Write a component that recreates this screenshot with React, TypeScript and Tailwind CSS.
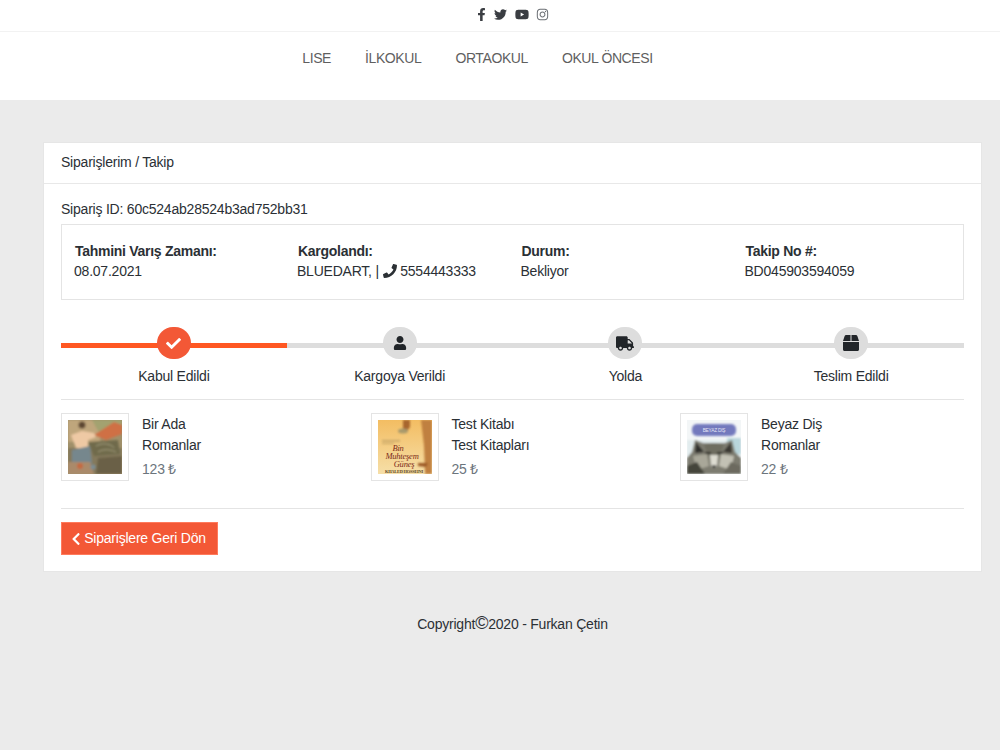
import { FaBox, FaCheck, FaChevronLeft, FaFacebookF, FaInstagram, FaPhone, FaTruck, FaTwitter, FaUser, FaYoutube } from 'react-icons/fa'
import type { IconType } from 'react-icons'

const NAV = ['LISE', 'İLKOKUL', 'ORTAOKUL', 'OKUL ÖNCESI']

const INFO = [
  { title: 'Tahmini Varış Zamanı:', value: '08.07.2021', width: 'w-[223px]' },
  { title: 'Kargolandı:', value: null, width: 'w-[223.5px]' },
  { title: 'Durum:', value: 'Bekliyor', width: 'w-[224px]' },
  { title: 'Takip No #:', value: 'BD045903594059', width: 'flex-1' },
]

const STEPS: { label: string; icon: IconType; size: string; active?: boolean }[] = [
  { label: 'Kabul Edildi', icon: FaCheck, size: 'w-[15px] h-[15px]', active: true },
  { label: 'Kargoya Verildi', icon: FaUser, size: 'w-[14px] h-[14px]' },
  { label: 'Yolda', icon: FaTruck, size: 'w-[18px] h-[15px]' },
  { label: 'Teslim Edildi', icon: FaBox, size: 'w-[16px] h-[16px]' },
]

function CoverIsland() {
  return (
    <svg viewBox="0 0 54 54" className="w-[54px] h-[54px] block">
      <defs>
        <filter id="soft1"><feGaussianBlur stdDeviation="1.1" /></filter>
      </defs>
      <rect width="54" height="54" fill="#a0906a" />
      <g filter="url(#soft1)">
        <rect x="0" y="0" width="32" height="22" fill="#bfa67c" />
        <path d="M24 0H54V14L34 18Z" fill="#a3a26f" />
        <path d="M26 15L46 2L54 5V14L38 20Z" fill="#cf6f45" />
        <path d="M0 28H54V54H0Z" fill="#84795c" />
        <path d="M3 15L14 11L26 13L28 17L20 20L20 30L8 28Z" fill="#eec9a4" />
        <circle cx="14" cy="5" r="3.5" fill="#5d4632" />
        <path d="M4 30L22 26L24 44L4 44Z" fill="#76878d" />
        <path d="M20 22L50 20L52 34L26 36Z" fill="#6f6a4c" />
        <path d="M28 26C34 22 44 24 46 28M30 32C36 28 44 30 48 32" stroke="#a49e7c" strokeWidth="1" fill="none" />
        <path d="M30 38L54 36V54H28Z" fill="#6a6146" />
        <path d="M0 42L22 42L26 54H0Z" fill="#aa8a6b" />
        <circle cx="12" cy="46" r="3" fill="#c46a42" />
        <circle cx="25" cy="47" r="2.5" fill="#7b8e95" />
      </g>
    </svg>
  )
}

function CoverTest() {
  return (
    <svg viewBox="0 0 54 54" className="w-[54px] h-[54px] block">
      <defs>
        <filter id="soft2"><feGaussianBlur stdDeviation="0.8" /></filter>
        <linearGradient id="sand" x1="0" y1="0" x2="0" y2="1">
          <stop offset="0" stopColor="#f3bd62" />
          <stop offset="1" stopColor="#f6dfa8" />
        </linearGradient>
      </defs>
      <rect width="54" height="54" fill="url(#sand)" />
      <g filter="url(#soft2)">
        <path d="M43 0H54V54H47L46 26Z" fill="#c0803f" />
        <path d="M25 0H32V7L29 11L25 9Z" fill="#a8662f" />
        <ellipse cx="25" cy="11" rx="5" ry="2.5" fill="#a99a6c" />
        <rect x="4" y="20" width="18" height="1.5" fill="#c2a164" />
        <rect x="4" y="23" width="12" height="1" fill="#c2a164" />
        <path d="M40 43L50 43L48 47L40 46Z" fill="#9c5a28" />
      </g>
      <g fontFamily="'Liberation Serif', serif" fontStyle="italic" fill="#7c2a18" textAnchor="middle">
        <text x="20" y="31" fontSize="8.5">Bin</text>
        <text x="24" y="39" fontSize="8.5">Muhteşem</text>
        <text x="26" y="47" fontSize="8.5">Güneş</text>
      </g>
      <text x="26" y="52.5" fontSize="4.4" fontWeight="bold" fill="#5c4525" textAnchor="middle" fontFamily="'Liberation Serif', serif">KHALED HOSSEINI</text>
    </svg>
  )
}

function CoverWolf() {
  return (
    <svg viewBox="0 0 54 54" className="w-[54px] h-[54px] block">
      <defs>
        <filter id="soft3"><feGaussianBlur stdDeviation="1" /></filter>
      </defs>
      <rect width="54" height="54" fill="#f3f6f7" />
      <g filter="url(#soft3)">
        <rect x="5" y="4" width="44" height="12" rx="5" fill="#7379bd" />
        <rect x="0" y="20" width="54" height="16" fill="#e2ecee" />
        <path d="M40 18H54V34H40Z" fill="#b9d6dc" />
        <path d="M0 54V38L5 32L8 20L16 23H38L45 20L48 32L54 38V54Z" fill="#7d7c70" />
        <path d="M9 22L17 32L8 33Z" fill="#2f2d29" />
        <path d="M44 22L36 32L45 33Z" fill="#3a3832" />
        <path d="M17 25L27 23L37 25L33 36L27 38L21 36Z" fill="#6e6d60" />
        <path d="M6 36L20 34L22 46L10 50Z" fill="#a9a799" />
        <path d="M47 36L34 34L32 46L44 50Z" fill="#c2c1b4" />
        <path d="M23 35H31L30 46L27 49L24 46Z" fill="#dddcd1" />
        <path d="M24.5 45.5H29.5L27 49Z" fill="#191816" />
        <rect x="18" y="32" width="6" height="2" fill="#2c2b25" />
        <rect x="30" y="32" width="6" height="2" fill="#2c2b25" />
        <path d="M0 46L10 42L18 54H0Z" fill="#45443b" />
        <path d="M54 46L44 42L36 54H54Z" fill="#6c6b5f" />
      </g>
      <text x="27" y="11.5" fontSize="4.8" fill="#e2e4f4" textAnchor="middle" fontFamily="'Liberation Sans', sans-serif">BEYAZ DIŞ</text>
    </svg>
  )
}

const ITEMS = [
  { name: 'Bir Ada', category: 'Romanlar', price: '123 ₺', cover: <CoverIsland /> },
  { name: 'Test Kitabı', category: 'Test Kitapları', price: '25 ₺', cover: <CoverTest /> },
  { name: 'Beyaz Diş', category: 'Romanlar', price: '22 ₺', cover: <CoverWolf /> },
]

export default function App() {
  return (
    <div className="min-h-[750px] bg-[#ebebeb] text-[14px] leading-[21px] tracking-[-0.22px] text-[#2b3035] font-['Liberation_Sans',Arial,sans-serif]">
      {/* Top */}
      <header className="bg-white h-[100px]">
        <div className="h-[32px] border-b border-[#f2f2f2] flex items-center justify-center gap-[8px] text-[#3a3d42] pb-[2px] pl-[26px]">
          <FaFacebookF className="w-[9px] h-[13px]" />
          <FaTwitter className="w-[13px] h-[13px]" />
          <FaYoutube className="w-[14px] h-[13px]" />
          <FaInstagram className="w-[13px] h-[13px] -ml-px text-[#6b6f74]" />
        </div>
        <nav className="flex justify-center gap-[34px] pt-[16px] pr-[45px] text-[#5f5f5f] tracking-[-0.4px]">
          {NAV.map((n) => (
            <a key={n} className="leading-[21px]">{n}</a>
          ))}
        </nav>
      </header>

      <main className="pt-[42px] pl-[43px] pr-[18px]">
        <section className="bg-white border border-[#e6e6e6] h-[430px]">
          <div className="h-[41px] border-b border-[#e8e8e8] px-[17px] flex items-center pb-[1px]">
            Siparişlerim / Takip
          </div>

          <div className="px-[17px] pt-[15px]">
            <div>Sipariş ID: 60c524ab28524b3ad752bb31</div>

            <div className="mt-[4px] h-[76px] border border-[#e4e4e4] flex pl-[12px] pt-[16px]">
              {INFO.map((c) => (
                <div key={c.title} className={c.width}>
                  <div className="font-bold pl-px tracking-[-0.28px]">{c.title}</div>
                  <div className="mt-[-1px]">
                    {c.value ?? (
                      <>
                        BLUEDART, | <FaPhone className="inline w-[14px] h-[14px] align-[-2px]" /> 5554443333
                      </>
                    )}
                  </div>
                </div>
              ))}
            </div>

            {/* Stepper */}
            <div className="mt-[27px] flex h-[60px]">
              {STEPS.map(({ label, icon: Icon, size, active }) => (
                <div key={label} className="relative flex-1 flex flex-col items-center">
                  <div className={`absolute left-0 right-0 top-[16px] h-[5px] ${active ? 'bg-[#ff5722]' : 'bg-[#dddddd]'}`} />
                  <div className={`relative z-10 w-[34px] h-[34px] rounded-full flex items-center justify-center ${active ? 'bg-[#f35836] text-white' : 'bg-[#dddddd] text-[#212529]'}`}>
                    <Icon className={size} />
                  </div>
                  <div className="mt-[7px]">{label}</div>
                </div>
              ))}
            </div>

            <div className="mt-[12px] border-t border-[#e4e4e4]" />

            {/* Books */}
            <div className="mt-[13px] flex">
              {ITEMS.map((it) => (
                <div key={it.name} className="w-[309.5px] shrink-0 flex">
                  <div className="w-[68px] h-[68px] border border-[#e4e4e4] flex items-center justify-center shrink-0">
                    {it.cover}
                  </div>
                  <div className="ml-[13px] pt-[1px]">
                    <div>{it.name}</div>
                    <div>{it.category}</div>
                    <div className="mt-[3px] text-[#6c757d]">{it.price}</div>
                  </div>
                </div>
              ))}
            </div>

            <div className="mt-[27px] border-t border-[#e4e4e4]" />

            <button className="mt-[13px] h-[33px] w-[157px] pr-[2px] bg-[#f35836] border border-[#ff7a5c] text-white flex items-center justify-center gap-[3px]">
              <FaChevronLeft className="w-[10px] h-[14px]" />
              Siparişlere Geri Dön
            </button>
          </div>
        </section>
      </main>

      <footer className="mt-[41px] flex justify-center items-baseline pl-[25px]">
        Copyright<span className="text-[18px] leading-[21px]">©</span>2020 - Furkan Çetin
      </footer>
    </div>
  )
}
